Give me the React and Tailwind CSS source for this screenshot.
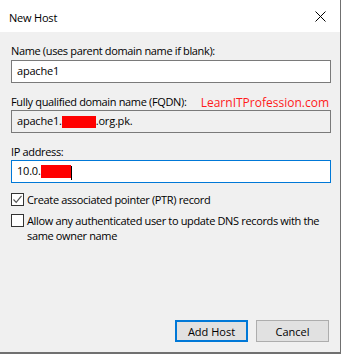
import React from 'react';

const font = { fontFamily: '"Open Sans", "Noto Sans", sans-serif' };

const Label = ({ children, right }) => (
  <div className="flex items-end justify-between h-[15px] leading-[15px] text-[11px] tracking-[-0.35px] text-black whitespace-nowrap">
    <span>{children}</span>
    {right}
  </div>
);

const Check = ({ checked }) => (
  <span className="mt-[1px] w-[13px] h-[13px] shrink-0 border border-[#333333] bg-white flex items-center justify-center">
    {checked && (
      <svg width="11" height="11" viewBox="0 0 11 11">
        <path d="M1.5 5.5 L4.2 8.3 L9.5 1.8" fill="none" stroke="#555555" strokeWidth="1.2" />
      </svg>
    )}
  </span>
);

export default function App() {
  return (
    <div className="w-[342px] h-[356px] bg-white" style={font}>
      <div className="w-[341px] h-[354px] border-r border-b-2 border-[#707070] flex flex-col">
        {/* Title bar */}
        <div className="h-[32px] shrink-0 bg-white flex items-center justify-between pl-[9px] pr-[14px]">
          <span className="text-[11px] tracking-[-0.2px] text-black leading-none mt-[2px]">New Host</span>
          <svg width="11" height="11" viewBox="0 0 11 11">
            <path d="M0.5 0.5 L10.5 10.5 M10.5 0.5 L0.5 10.5" stroke="#000" strokeWidth="1" />
          </svg>
        </div>

        {/* Body */}
        <div className="flex-1 bg-[#f0f0f0] pl-[11px] pr-[9px] pt-[11px] flex flex-col">
          <Label>Name (uses parent domain name if blank):</Label>
          <div className="mt-[2px] h-[23px] border border-[#7a7a7a] bg-white flex items-center pl-[5px] text-[11px] tracking-[-0.2px]">
            apache1
          </div>

          <div className="mt-[11px]">
            <Label
              right={
                <span className="text-[12px] tracking-normal leading-[15px] text-[#ff1a1a] mr-[2px] -mb-[1px]">
                  LearnITProfession.com
                </span>
              }
            >
              Fully qualified domain name (FQDN):
            </Label>
          </div>
          <div className="mt-[1px] h-[23px] border border-[#7a7a7a] bg-[#f0f0f0] flex items-center pl-[5px] text-[11px] tracking-[-0.2px]">
            <span>apache1.</span>
            <span className="w-[34px] h-[12px] bg-[#ff0000]"></span>
            <span>.org.pk.</span>
          </div>

          <div className="mt-[11px]">
            <Label>IP address:</Label>
          </div>
          <div className="mt-[1px] h-[23px] border border-[#0078d7] bg-white flex items-center pl-[5px] text-[11px] tracking-[-0.2px]">
            <span>10.0.</span>
            <span className="w-[30px] h-[13px] bg-[#ff0000]"></span>
            <span className="w-[1px] h-[14px] bg-black mt-[2px]"></span>
          </div>

          <div className="mt-[9px] flex items-start gap-[3px] text-[11px] tracking-[-0.35px] leading-[15px] whitespace-nowrap">
            <Check checked />
            <span>Create associated pointer (PTR) record</span>
          </div>
          <div className="mt-[6px] flex items-start gap-[3px] text-[11px] tracking-[-0.35px] leading-[15px] whitespace-nowrap">
            <Check />
            <span>
              Allow any authenticated user to update DNS records with the
              <br />
              same owner name
            </span>
          </div>

          <div className="mt-auto mb-[10px] flex justify-end gap-[8px] pr-[2px]">
            <button className="w-[73px] h-[22px] border-2 border-[#0078d7] bg-[#e1e1e1] text-[11px] text-black leading-none">
              Add Host
            </button>
            <button className="w-[73px] h-[22px] border border-[#adadad] bg-[#e1e1e1] text-[11px] text-black leading-none">
              Cancel
            </button>
          </div>
        </div>
      </div>
    </div>
  );
}
